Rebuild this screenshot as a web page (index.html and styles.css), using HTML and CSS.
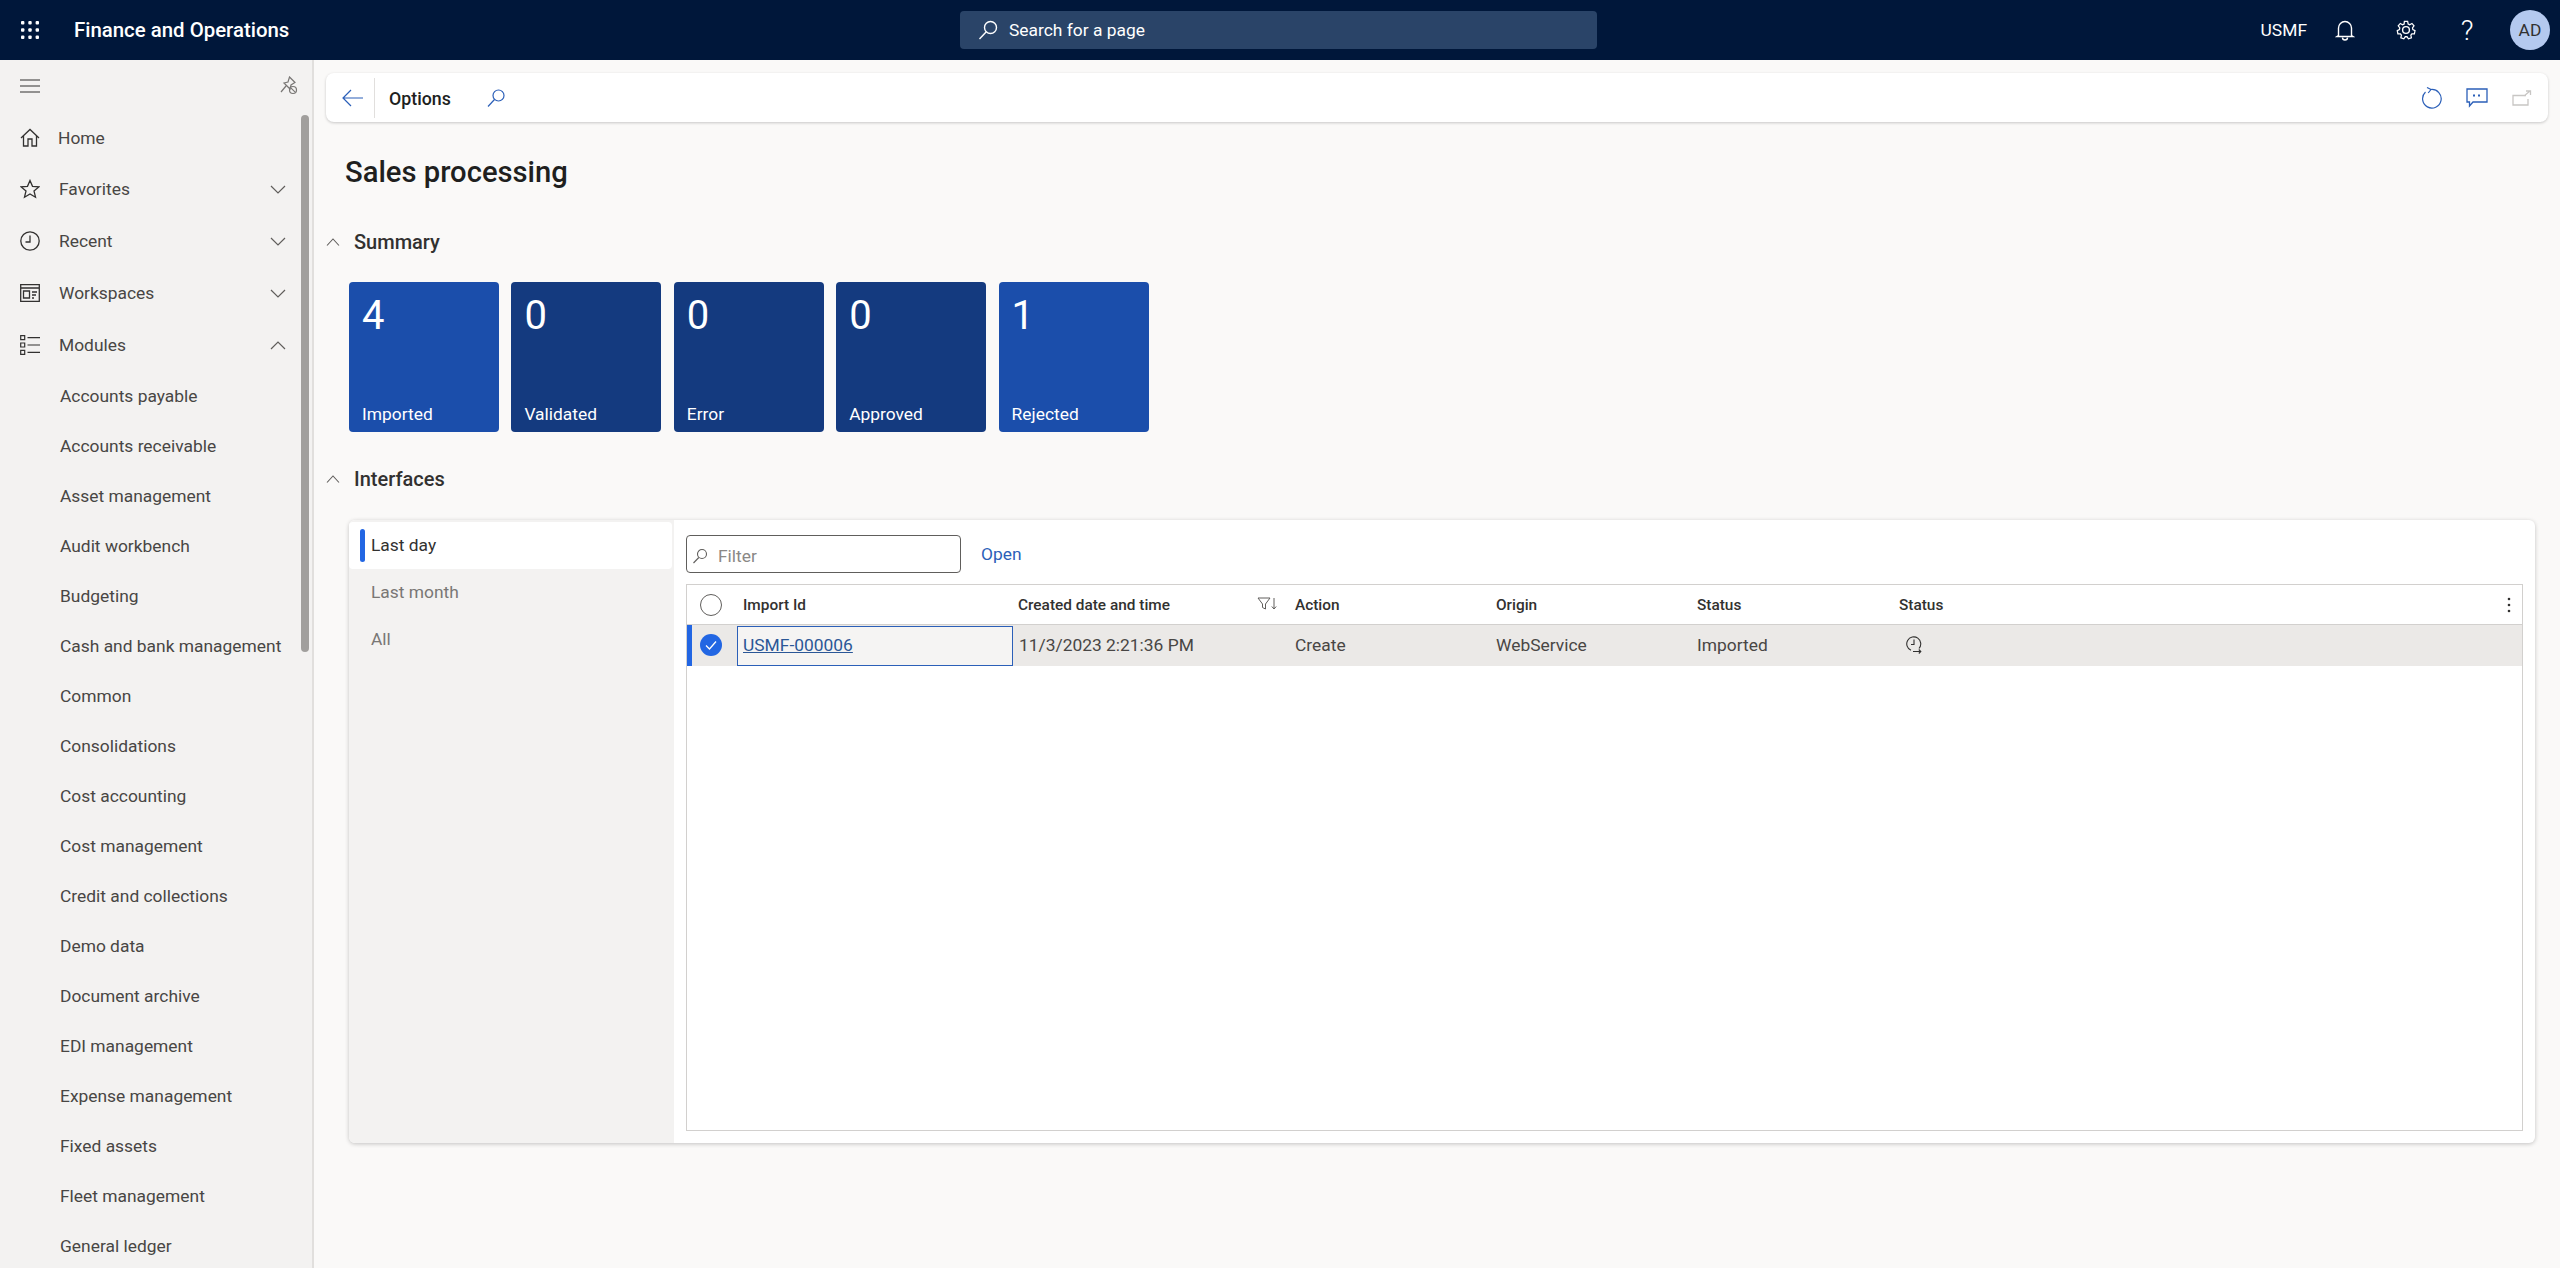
FILE: index.html
```html
<!DOCTYPE html>
<html lang="en">
<head>
    <meta charset="UTF-8">
    <title>Sales processing - Finance and Operations</title>
    <link rel="stylesheet" href="styles.css">
</head>
<body>
    <header class="topbar">
        <div class="topbar-left">
            <svg class="waffle" width="20" height="20" viewBox="0 0 20 20" fill="#fff">
                <rect x="1" y="1" width="3.4" height="3.4" rx="1"/><rect x="8.3" y="1" width="3.4" height="3.4" rx="1"/><rect x="15.6" y="1" width="3.4" height="3.4" rx="1"/>
                <rect x="1" y="8.3" width="3.4" height="3.4" rx="1"/><rect x="8.3" y="8.3" width="3.4" height="3.4" rx="1"/><rect x="15.6" y="8.3" width="3.4" height="3.4" rx="1"/>
                <rect x="1" y="15.6" width="3.4" height="3.4" rx="1"/><rect x="8.3" y="15.6" width="3.4" height="3.4" rx="1"/><rect x="15.6" y="15.6" width="3.4" height="3.4" rx="1"/>
            </svg>
            <span class="app-name">Finance and Operations</span>
        </div>
        <div class="page-search">
            <svg width="22" height="22" viewBox="0 0 22 22" fill="none" stroke="#fff" stroke-width="1.4"><circle cx="13.5" cy="8.5" r="6"/><path d="M9.3 12.8 2.5 20"/></svg>
            <span>Search for a page</span>
        </div>
        <div class="topbar-right">
            <span class="company">USMF</span>
            <svg width="20" height="22" viewBox="0 0 20 22" fill="none" stroke="#fff" stroke-width="1.4"><path d="M3.5 16.5V9a6.500 6.500 0 0 1 13 0v7.500l1.500 1H2z"/><path d="M7.500 18.500a2.500 2.500 0 0 0 5 0"/></svg>
            <svg width="22" height="22" viewBox="0 0 22 22" fill="none" stroke="#fff" stroke-width="1.4"><circle cx="11" cy="11" r="3.4"/><path d="M9.200 1.500h3.600l.6 2.800 1.700.8 2.500-1.400 2.300 2.700-1.700 2.300.4 1.800 2.400 1.200-.7 3.500-2.800.1-1.100 1.500.6 2.800-3.300 1.200-1.600-2.300h-1.900l-1.600 2.300-3.300-1.200.6-2.800-1.100-1.500-2.800-.1-.7-3.500 2.400-1.200.4-1.800-1.700-2.300 2.300-2.700 2.500 1.400 1.700-.8z" transform="translate(1.100 1.100) scale(.9)"/></svg>
            <span class="help">?</span>
            <span class="avatar">AD</span>
        </div>
    </header>

    <div class="shell">
        <nav class="sidebar">
            <div class="sidebar-top">
                <svg width="20" height="14" viewBox="0 0 20 14" stroke="#323130" stroke-width="1.100"><path d="M0 1h20M0 7h20M0 13h20"/></svg>
                <svg width="18" height="20" viewBox="0 0 18 20" fill="none" stroke="#797775" stroke-width="1.200"><path d="M9.500 1 15 6.500 11 9l-1 4-6-6 4-1zM6 10l-5 6"/><circle cx="13" cy="14" r="3.500"/><path d="m10.800 11.800 4.400 4.400"/></svg>
            </div>
            <div class="scroll-thumb"></div>
            <ul class="nav-main">
                <li class="nav-item">
                    <svg class="nav-icon" width="20" height="20" viewBox="0 0 20 20" fill="none" stroke="#323130" stroke-width="1.300"><path d="M1 10 10 1.500 19 10M3.500 8v10h4.500v-7h4v7h4.500V8"/></svg>
                    <span class="home-label">Home</span>
                </li>
                <li class="nav-item">
                    <svg class="nav-icon" width="20" height="20" viewBox="0 0 20 20" fill="none" stroke="#323130" stroke-width="1.300"><path d="m10 1.500 2.500 5.800 6.300.6-4.800 4.100 1.500 6.200-5.500-3.300-5.500 3.300L6 12 1.200 7.900l6.300-.6z"/></svg>
                    <span>Favorites</span>
                    <svg class="chev" width="16" height="9" viewBox="0 0 16 9" fill="none" stroke="#605e5c" stroke-width="1.200"><path d="m1 1 7 7 7-7"/></svg>
                </li>
                <li class="nav-item">
                    <svg class="nav-icon" width="20" height="20" viewBox="0 0 20 20" fill="none" stroke="#323130" stroke-width="1.300"><circle cx="10" cy="10" r="9.200"/><path d="M10 4.500V11H5.500"/></svg>
                    <span>Recent</span>
                    <svg class="chev" width="16" height="9" viewBox="0 0 16 9" fill="none" stroke="#605e5c" stroke-width="1.200"><path d="m1 1 7 7 7-7"/></svg>
                </li>
                <li class="nav-item">
                    <svg class="nav-icon" width="20" height="20" viewBox="0 0 20 20" fill="none" stroke="#323130" stroke-width="1.300"><path d="M.7 1.700h18.600v16.600H.7zM.7 5h18.600M3.500 8h6v7h-6zM12 9h5M12 12h4M12 15h2"/></svg>
                    <span>Workspaces</span>
                    <svg class="chev" width="16" height="9" viewBox="0 0 16 9" fill="none" stroke="#605e5c" stroke-width="1.200"><path d="m1 1 7 7 7-7"/></svg>
                </li>
                <li class="nav-item">
                    <svg class="nav-icon" width="20" height="20" viewBox="0 0 20 20" fill="none" stroke="#323130" stroke-width="1.200"><path d="M.7.700h4v4h-4zM.7 8h4v4h-4zM.7 15.300h4v4h-4zM7.500 2.700H20M7.500 10H20M7.500 17.300H20"/></svg>
                    <span>Modules</span>
                    <svg class="chev" width="16" height="9" viewBox="0 0 16 9" fill="none" stroke="#605e5c" stroke-width="1.200"><path d="m1 8 7-7 7 7"/></svg>
                </li>
            </ul>
            <ul class="nav-modules">
                <li>Accounts payable</li>
                <li>Accounts receivable</li>
                <li>Asset management</li>
                <li>Audit workbench</li>
                <li>Budgeting</li>
                <li>Cash and bank management</li>
                <li>Common</li>
                <li>Consolidations</li>
                <li>Cost accounting</li>
                <li>Cost management</li>
                <li>Credit and collections</li>
                <li>Demo data</li>
                <li>Document archive</li>
                <li>EDI management</li>
                <li>Expense management</li>
                <li>Fixed assets</li>
                <li>Fleet management</li>
                <li>General ledger</li>
            </ul>
        </nav>

        <main class="content">
            <div class="toolbar">
                <svg width="22" height="18" viewBox="0 0 22 18" fill="none" stroke="#2b5fb8" stroke-width="1.200"><path d="M21 9H1.500M9 1 1 9l8 8"/></svg>
                <span class="toolbar-sep"></span>
                <span class="toolbar-title">Options</span>
                <svg class="toolbar-search" width="20" height="20" viewBox="0 0 20 20" fill="none" stroke="#2b5fb8" stroke-width="1.200"><circle cx="12.500" cy="7.500" r="5.500"/><path d="M8.500 11.500 2 18.500"/></svg>
                <div class="toolbar-actions">
                    <svg width="22" height="22" viewBox="0 0 22 22" fill="none" stroke="#2b5fb8" stroke-width="1.200"><path d="M5.500 5a9.300 9.300 0 1 0 5.500-2.500M7 .5l4 2-2.800 3.500"/></svg>
                    <svg width="22" height="20" viewBox="0 0 22 20" fill="none" stroke="#2b5fb8" stroke-width="1.300"><path d="M1 1h20v13H7l-3.500 4v-4H1z"/><path d="M8 6.500v2M13 6.500v2" stroke-width="2"/></svg>
                    <svg width="20" height="16" viewBox="0 0 20 16" fill="none" stroke="#c8c6c4" stroke-width="1.300"><path d="M14 5.500H1V15h15V9M12 6l6-5M14 1h4.500v4"/></svg>
                </div>
            </div>

            <h1 class="page-title">Sales processing</h1>

            <section>
                <h2 class="section-head">
                    <svg width="14" height="8" viewBox="0 0 14 8" fill="none" stroke="#605e5c" stroke-width="1.100"><path d="m1 7.500 6-6.500 6 6.500"/></svg>
                    Summary
                </h2>
                <div class="tiles">
                    <div class="tile tile-light"><span class="tile-num">4</span><span class="tile-label">Imported</span></div>
                    <div class="tile"><span class="tile-num">0</span><span class="tile-label">Validated</span></div>
                    <div class="tile"><span class="tile-num">0</span><span class="tile-label">Error</span></div>
                    <div class="tile"><span class="tile-num">0</span><span class="tile-label">Approved</span></div>
                    <div class="tile tile-light"><span class="tile-num">1</span><span class="tile-label">Rejected</span></div>
                </div>
            </section>

            <section>
                <h2 class="section-head section-interfaces">
                    <svg width="14" height="8" viewBox="0 0 14 8" fill="none" stroke="#605e5c" stroke-width="1.100"><path d="m1 7.500 6-6.500 6 6.500"/></svg>
                    Interfaces
                </h2>
                <div class="panel">
                    <ul class="periods">
                        <li class="period active">Last day</li>
                        <li class="period">Last month</li>
                        <li class="period">All</li>
                    </ul>
                    <div class="panel-body">
                        <div class="grid-actions">
                            <div class="filter">
                                <svg width="16" height="16" viewBox="0 0 16 16" fill="none" stroke="#605e5c" stroke-width="1.100"><circle cx="10" cy="6" r="4.500"/><path d="M6.800 9.500 1.500 15"/></svg>
                                <span>Filter</span>
                            </div>
                            <span class="open-link">Open</span>
                        </div>
                        <div class="grid">
                            <div class="grid-row grid-head">
                                <span class="cell cell-check"><span class="radio"></span></span>
                                <span class="cell cell-id">Import Id</span>
                                <span class="cell cell-date">Created date and time
                                    <svg class="filter-sort" width="20" height="14" viewBox="0 0 20 14" fill="none" stroke="#605e5c" stroke-width="1"><path d="M1 1h12L8.500 7v5l-3-1.500V7zM17 1v11M14.800 9.500 17 12l2.200-2.500"/></svg>
                                </span>
                                <span class="cell cell-action">Action</span>
                                <span class="cell cell-origin">Origin</span>
                                <span class="cell cell-status">Status</span>
                                <span class="cell cell-icon">Status</span>
                                <svg class="more" width="4" height="16" viewBox="0 0 4 16" fill="#323130"><circle cx="2" cy="2" r="1.300"/><circle cx="2" cy="8" r="1.300"/><circle cx="2" cy="14" r="1.300"/></svg>
                            </div>
                            <div class="grid-row grid-selected">
                                <span class="cell cell-check">
                                    <svg width="22" height="22" viewBox="0 0 22 22"><circle cx="11" cy="11" r="11" fill="#2266e3"/><path d="m6 11.500 3.500 3.500L16 7.500" fill="none" stroke="#fff" stroke-width="1.300"/></svg>
                                </span>
                                <span class="cell cell-id cell-focus"><a class="id-link">USMF-000006</a></span>
                                <span class="cell cell-date">11/3/2023 2:21:36 PM</span>
                                <span class="cell cell-action">Create</span>
                                <span class="cell cell-origin">WebService</span>
                                <span class="cell cell-status">Imported</span>
                                <span class="cell cell-icon">
                                    <svg width="16" height="18" viewBox="0 0 16 18" fill="none" stroke="#323130" stroke-width="1.100"><path d="M5 14.300A7 7 0 1 1 13 12.500M8 3.500V8.500H5M7 15.500h7.500M12.800 13.500l2 2-2 2"/></svg>
                                </span>
                            </div>
                        </div>
                    </div>
                </div>
            </section>
        </main>
    </div>
</body>
</html>
```

FILE: styles.css
```css
* {
    margin: 0;
    padding: 0;
    box-sizing: border-box;
}

html, body {
    height: 1268px;
    overflow: hidden;
}

body {
    font-family: Roboto, "Open Sans", "Liberation Sans", sans-serif;
    font-size: 17.4px;
    color: #323130;
    background: #faf9f8;
}

ul {
    list-style: none;
}

/* top bar */

.topbar {
    height: 60px;
    background: #00173a;
    color: #fff;
    display: grid;
    grid-template-columns: 960px 637px 1fr;
    align-items: center;
}

.topbar-left {
    display: flex;
    align-items: center;
    padding-left: 20px;
}

.app-name {
    margin-left: 34px;
    font-size: 20.4px;
    font-weight: 500;
}

.page-search {
    height: 38px;
    background: #2a4468;
    border-radius: 4px;
    display: flex;
    align-items: center;
    gap: 10px;
    padding-left: 17px;
    font-size: 17.4px;
}

.topbar-right {
    display: flex;
    align-items: center;
    justify-content: flex-end;
    padding-right: 10px;
    gap: 40px;
}

.company {
    font-size: 17.4px;
    margin-right: -12px;
}

.help {
    font-size: 28px;
    font-weight: 300;
    width: 20px;
    text-align: center;
}

.avatar {
    width: 40px;
    height: 40px;
    border-radius: 50%;
    background: #b4c9ef;
    color: #323130;
    font-size: 17.4px;
    display: flex;
    align-items: center;
    justify-content: center;
    margin-left: -7px;
}

/* layout */

.shell {
    display: flex;
    height: 1208px;
}

/* side nav */

.sidebar {
    width: 314px;
    flex-shrink: 0;
    background: #f3f2f1;
    border-right: 2px solid #e1dfdd;
    position: relative;
    overflow: hidden;
}

.sidebar-top {
    height: 52px;
    display: flex;
    align-items: center;
    justify-content: space-between;
    padding: 0 14px 0 20px;
    margin-bottom: 1px;
}

.scroll-thumb {
    position: absolute;
    left: 301px;
    top: 55px;
    width: 8px;
    height: 537px;
    background: #a19f9d;
    border-radius: 4px;
}

.nav-item {
    height: 52px;
    display: flex;
    align-items: center;
    padding: 0 26px 0 20px;
    font-size: 17.4px;
    color: #484644;
}

.nav-item:first-child {
    height: 50px;
}

.nav-icon {
    margin-right: 19px;
    flex-shrink: 0;
}

.home-label {
    margin-left: -1px;
}

.chev {
    margin-left: auto;
}

.nav-modules li {
    height: 50px;
    line-height: 50px;
    padding-left: 60px;
    font-size: 17.4px;
    color: #484644;
}

/* content */

.content {
    flex: 1;
    padding: 13px 12px 0 12px;
    min-width: 0;
}

.toolbar {
    height: 49px;
    background: #fff;
    border-radius: 8px;
    box-shadow: 0 1px 3px rgba(0, 0, 0, 0.2);
    display: flex;
    align-items: center;
    padding-left: 16px;
}

.toolbar-sep {
    width: 1px;
    height: 40px;
    background: #e1dfdd;
    margin: 0 14px 0 10px;
}

.toolbar-title {
    font-size: 17.8px;
    font-weight: 500;
    color: #201f1e;
    margin-top: 2px;
}

.toolbar-search {
    margin-left: 35px;
}

.toolbar-actions {
    margin-left: auto;
    display: flex;
    align-items: center;
    gap: 24px;
    padding-right: 16px;
}

.page-title {
    font-size: 29.2px;
    font-weight: 500;
    color: #201f1e;
    margin: 28px 0 0 19px;
    line-height: 44px;
}

.section-head {
    font-size: 20px;
    font-weight: 500;
    color: #323130;
    display: flex;
    align-items: center;
    gap: 14px;
    margin-top: 34px;
    line-height: 28px;
}

.section-interfaces {
    margin-top: 33px;
}

.tiles {
    display: flex;
    gap: 12.4px;
    margin: 26px 0 0 23px;
}

.tile {
    width: 150px;
    height: 150px;
    background: #143a7f;
    border-radius: 4px;
    color: #fff;
    padding: 10px 14px 5px 13px;
    display: flex;
    flex-direction: column;
    justify-content: space-between;
}

.tile-light {
    background: #1b4eab;
}

.tile-num {
    font-size: 40px;
    line-height: 48px;
}

.tile-label {
    font-size: 17.4px;
    line-height: 26px;
}

/* interfaces panel */

.panel {
    display: flex;
    height: 623px;
    margin: 27px 13px 0 23px;
    background: #fff;
    border-radius: 6px;
    box-shadow: 0 1px 4px rgba(0, 0, 0, 0.22);
}

.periods {
    width: 325px;
    background: #f3f2f1;
    padding-top: 2px;
    border-radius: 6px 0 0 6px;
    flex-shrink: 0;
}

.period {
    height: 47px;
    line-height: 47px;
    padding-left: 22px;
    font-size: 17.4px;
    color: #797775;
    position: relative;
}

.period.active {
    background: #fff;
    color: #323130;
    margin-right: 2px;
    border-radius: 4px;
}

.period.active::before {
    content: '';
    position: absolute;
    left: 11px;
    top: 7px;
    width: 5px;
    height: 33px;
    background: #2266e3;
    border-radius: 3px;
}

.panel-body {
    flex: 1;
    padding: 15px 12px 12px 12px;
    display: flex;
    flex-direction: column;
}

.grid-actions {
    display: flex;
    align-items: center;
    gap: 20px;
    height: 38px;
    margin-bottom: 11px;
}

.filter {
    width: 275px;
    height: 38px;
    border: 1px solid #605e5c;
    border-radius: 4px;
    display: flex;
    align-items: center;
    gap: 10px;
    padding: 3px 5px 0;
    font-size: 17.4px;
    color: #8a8886;
}

.open-link {
    font-size: 17.4px;
    color: #2b5fb8;
}

.grid {
    flex: 1;
    border: 1px solid #d2d0ce;
}

.grid-row {
    display: flex;
    align-items: center;
    position: relative;
}

.grid-head {
    height: 40px;
    font-size: 15.4px;
    font-weight: 500;
    color: #323130;
    border-bottom: 1px solid #d2d0ce;
}

.grid-selected {
    height: 41px;
    font-size: 17.4px;
    color: #484644;
    background: #ebe9e7;
    border-left: 5px solid #2266e3;
}

.cell {
    flex-shrink: 0;
    display: flex;
    align-items: center;
    height: 100%;
}

.grid-selected .cell {
    padding-bottom: 2px;
}

.cell-check {
    width: 50px;
    padding-left: 13px;
}

.radio {
    width: 22px;
    height: 22px;
    border: 1px solid #605e5c;
    border-radius: 50%;
}

.grid-selected .cell-check {
    width: 45px;
    padding-left: 8px;
}

.cell-id {
    width: 281px;
    padding-left: 6px;
}

.cell-date {
    width: 277px;
    position: relative;
}

.filter-sort {
    position: absolute;
    left: 239px;
    top: 12px;
}

.grid-selected .cell-date {
    width: 282px;
    padding-left: 6px;
}

.cell-action,
.cell-origin {
    width: 201px;
}

.cell-status {
    width: 202px;
}

.grid-selected .cell-icon {
    padding-left: 7px;
}

.cell-focus {
    width: 276px;
    background: #f5f4f3;
    border: 1px solid #2b5fb8;
    padding-left: 5px;
    height: 40px;
}

.id-link {
    color: #2b5797;
    text-decoration: underline;
}

.more {
    position: absolute;
    right: 11px;
    top: 12px;
}
```
